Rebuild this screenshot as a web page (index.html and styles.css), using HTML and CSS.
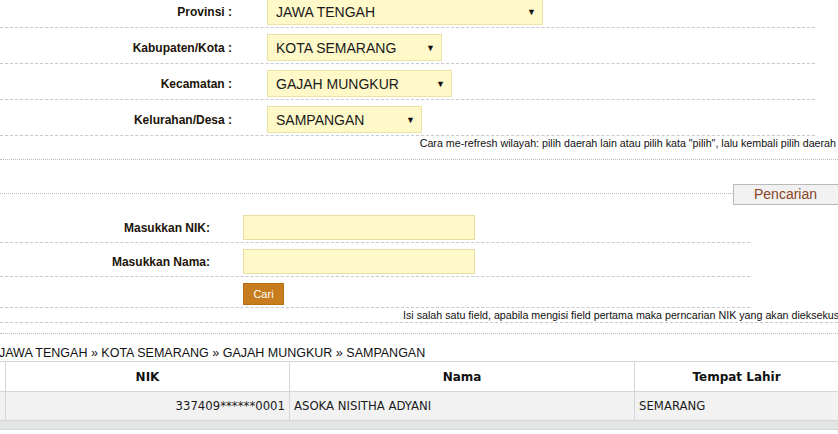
FILE: index.html
```html
<!DOCTYPE html>
<html lang="id">
<head>
    <meta charset="UTF-8">
    <meta name="viewport" content="width=device-width, initial-scale=1.0">
    <title>Pencarian Data Penduduk</title>
    <link rel="stylesheet" href="styles.css">
</head>
<body>
    <div class="wilayah">
        <div class="row">
            <label>Provinsi :</label>
            <div class="select sel-prov"><span>JAWA TENGAH</span><span class="arrow">&#9660;</span></div>
        </div>
        <div class="row">
            <label>Kabupaten/Kota :</label>
            <div class="select sel-kab"><span>KOTA SEMARANG</span><span class="arrow">&#9660;</span></div>
        </div>
        <div class="row">
            <label>Kecamatan :</label>
            <div class="select sel-kec"><span>GAJAH MUNGKUR</span><span class="arrow">&#9660;</span></div>
        </div>
        <div class="row">
            <label>Kelurahan/Desa :</label>
            <div class="select sel-kel"><span>SAMPANGAN</span><span class="arrow">&#9660;</span></div>
        </div>
    </div>

    <div class="note-refresh">Cara me-refresh wilayah: pilih daerah lain atau pilih kata "pilih", lalu kembali pilih daerah</div>

    <div class="tab-bar">
        <div class="tab-line"></div>
        <div class="tab">Pencarian</div>
    </div>

    <div class="search-form">
        <div class="form-row">
            <label for="nik">Masukkan NIK:</label>
            <input type="text" id="nik" class="field">
        </div>
        <div class="form-row">
            <label for="nama">Masukkan Nama:</label>
            <input type="text" id="nama" class="field">
        </div>
        <div class="form-row">
            <span></span>
            <button class="btn-cari">Cari</button>
        </div>
    </div>

    <div class="note-isi">Isi salah satu field, apabila mengisi field pertama maka perncarian NIK yang akan dieksekusi</div>
    <div class="spacer"></div>

    <div class="crumb">JAWA TENGAH &raquo; KOTA SEMARANG &raquo; GAJAH MUNGKUR &raquo; SAMPANGAN</div>

    <table class="result">
        <thead>
            <tr>
                <th class="col-no"></th>
                <th class="col-nik">NIK</th>
                <th class="col-nama">Nama</th>
                <th>Tempat Lahir</th>
            </tr>
        </thead>
        <tbody>
            <tr>
                <td class="col-no"></td>
                <td class="num">337409******0001</td>
                <td>ASOKA NISITHA ADYANI</td>
                <td>SEMARANG</td>
            </tr>
        </tbody>
        <tfoot>
            <tr><td colspan="4"></td></tr>
        </tfoot>
    </table>
</body>
</html>
```

FILE: styles.css
```css
body {
    margin: 0;
    font-family: "Liberation Sans", Arial, sans-serif;
    color: #111;
    background: #fff;
    overflow: hidden;
}

/* pilihan wilayah */
.wilayah {
    width: 815px;
    margin-top: -8px;
}

.row {
    display: grid;
    grid-template-columns: 232px auto;
    column-gap: 35px;
    align-items: center;
    padding: 6px 0 2px;
    border-bottom: 1px dashed #c9c9c9;
}

.row label,
.form-row label {
    text-align: right;
    font-size: 12px;
    font-weight: bold;
    color: #1c1408;
}

.select {
    display: flex;
    justify-content: space-between;
    align-items: center;
    box-sizing: border-box;
    height: 27px;
    padding: 0 6px 0 8px;
    background-color: #fff9c9;
    border: 1px solid #ebe2ab;
    font-size: 14px;
    color: #1a1a1a;
}

.select .arrow {
    font-size: 9px;
    color: #111;
}

.sel-prov { width: 276px; }
.sel-kab { width: 175px; }
.sel-kec { width: 185px; }
.sel-kel { width: 155px; }

.note-refresh {
    text-align: right;
    font-size: 10.7px;
    line-height: 14px;
    padding: 0 2px 9px 0;
    border-bottom: 1px dotted #bdbdbd;
}

/* judul tab */
.tab-bar {
    display: flex;
    align-items: flex-end;
    height: 39px;
}

.tab-line {
    flex: 1;
    border-bottom: 1px dotted #bdbdbd;
    margin-bottom: 5px;
}

.tab {
    width: 84px;
    height: 19px;
    line-height: 19px;
    padding-left: 20px;
    margin-bottom: -6px;
    background-color: #f1f1f1;
    border: 1px solid #b9b9b9;
    border-right: none;
    font-size: 14px;
    color: #8a4524;
}

/* form pencarian */
.search-form {
    width: 750px;
    margin-top: 10px;
}

.form-row {
    display: grid;
    grid-template-columns: 210px auto;
    column-gap: 33px;
    align-items: center;
    justify-items: start;
    padding: 6px 0 2px;
    border-bottom: 1px dashed #c9c9c9;
}

.form-row label {
    justify-self: end;
}

.field {
    box-sizing: border-box;
    width: 232px;
    height: 25px;
    margin: 0;
    background-color: #fff9c9;
    border: 1px solid #e8dda3;
}

.btn-cari {
    width: 41px;
    height: 22px;
    padding: 0;
    background-color: #c77c1d;
    border: 1px solid #b86e15;
    color: #fff;
    font-family: "Liberation Sans", Arial, sans-serif;
    font-size: 11px;
}

.note-isi {
    padding: 1px 0 0 403px;
    white-space: nowrap;
    overflow: hidden;
    font-size: 10.7px;
    line-height: 13px;
    border-bottom: 1px dashed #c9c9c9;
}

.spacer {
    height: 10px;
    border-bottom: 1px dotted #bdbdbd;
}

.crumb {
    margin: 12px 0 0 -1px;
    font-size: 12.5px;
    line-height: 15px;
    color: #111;
}

/* tabel hasil */
.result {
    width: 100%;
    border-collapse: collapse;
    font-family: "DejaVu Sans", Verdana, sans-serif;
    font-size: 11.7px;
}

.result th,
.result td {
    border-left: 1px solid #d6d6d6;
    padding: 0 4px;
}

.result th {
    height: 29px;
    border-top: 1px solid #d6d6d6;
    border-bottom: 1px solid #d6d6d6;
    font-size: 12px;
    font-weight: bold;
    background: #fff;
}

.result th:first-child,
.result td:first-child {
    border-left: none;
}

.result tbody td {
    height: 28px;
    background: #f2f2f2;
    border-bottom: 1px solid #d6d6d6;
    color: #1a1a1a;
}

.result .col-no {
    width: 5px;
    padding: 0;
}

.result .col-nik { width: 275px; }
.result .col-nama { width: 336px; }

.result .num {
    text-align: right;
}

.result tfoot td {
    height: 8px;
    padding: 0;
    background: #e2e7e4;
    border-bottom: 1px solid #d4d9d6;
}
```
